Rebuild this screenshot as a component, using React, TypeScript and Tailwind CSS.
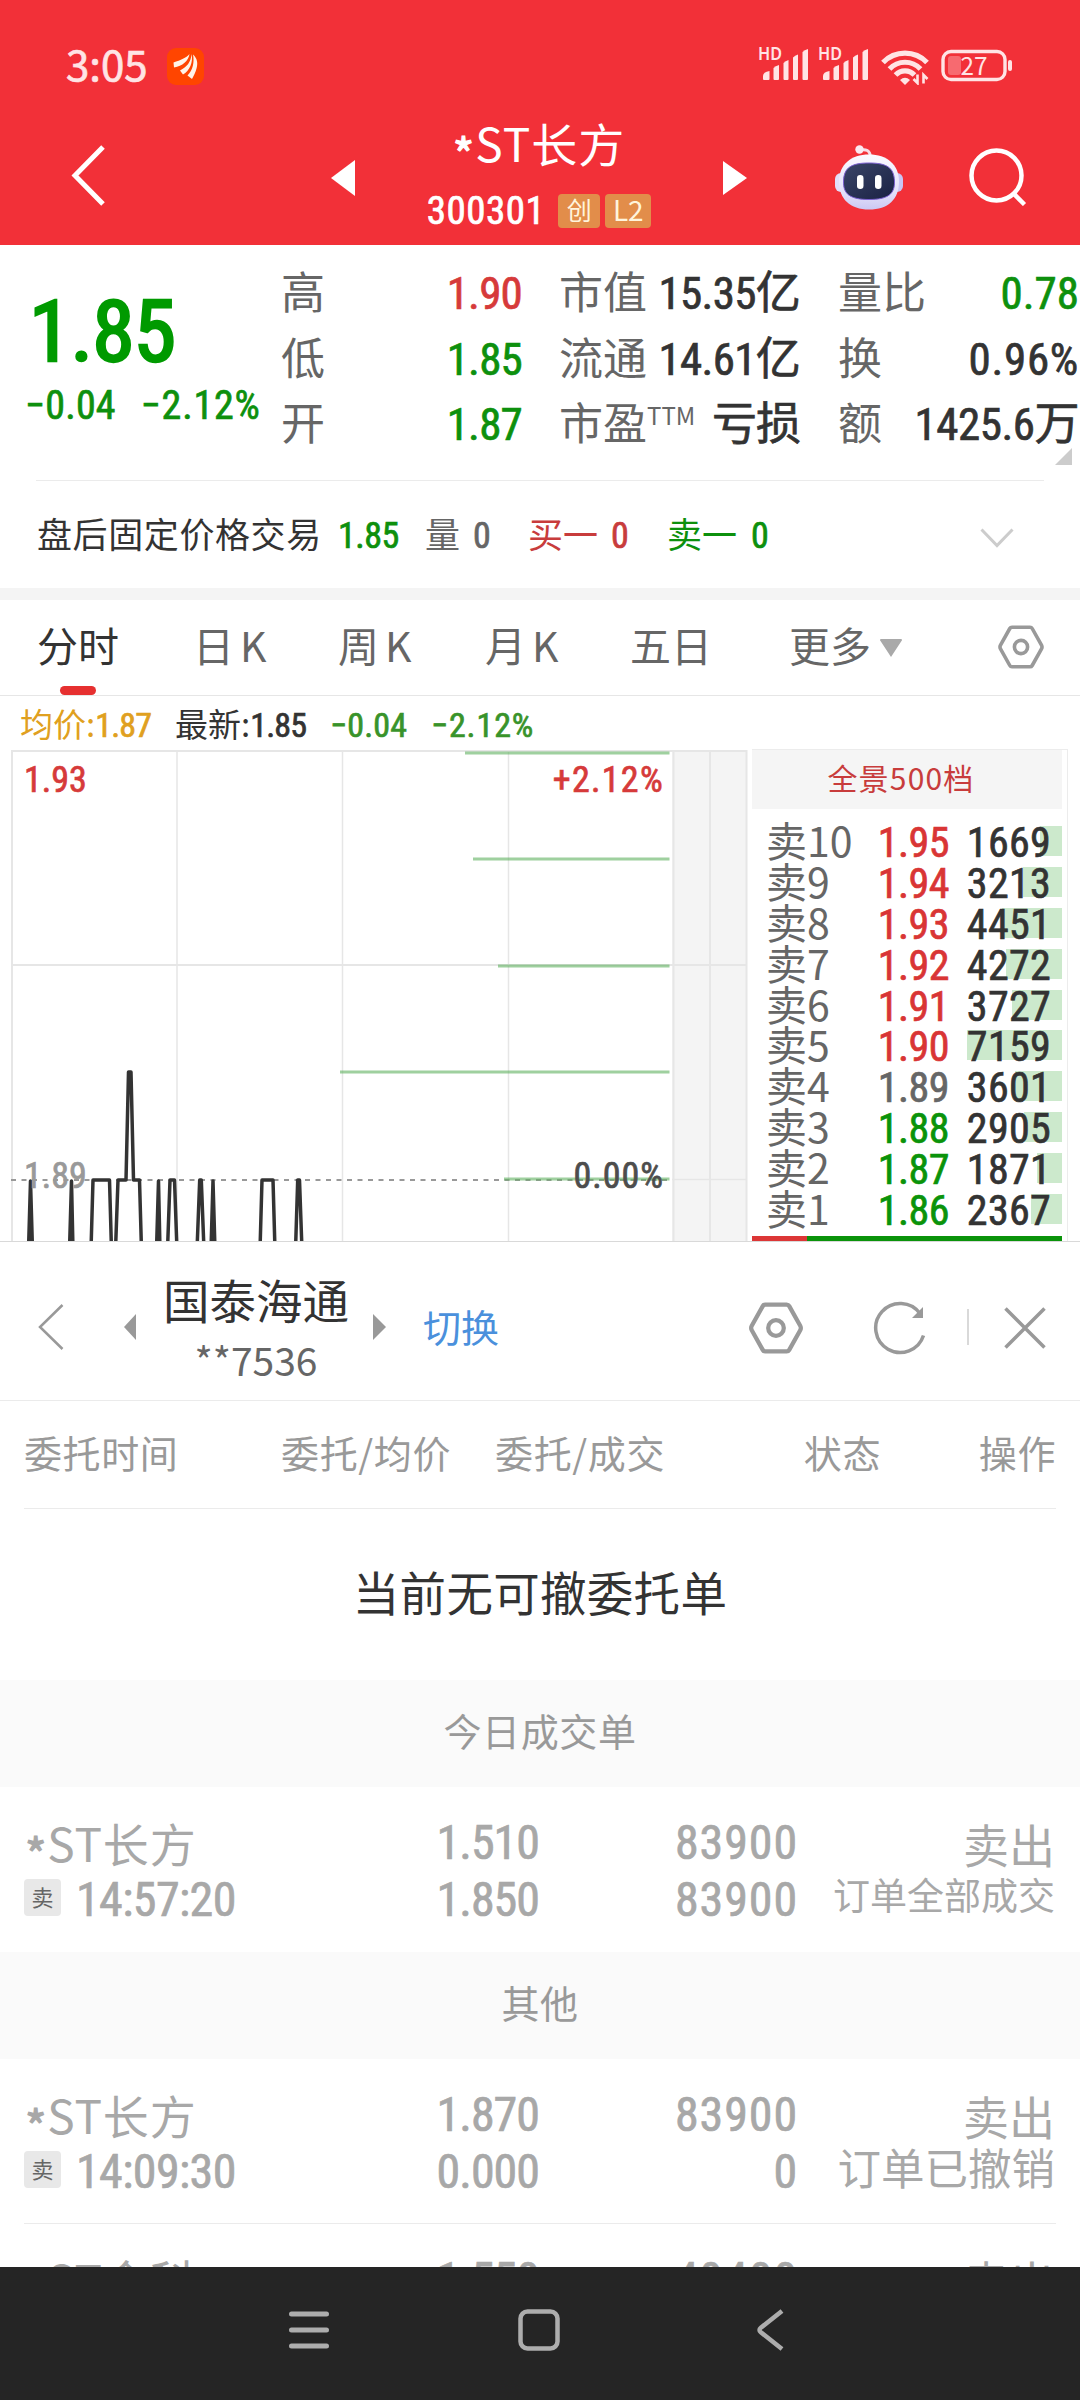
import type { ReactNode } from "react";

interface Level {
    name: string;
    price: string;
    volume: string;
    color: string;
    bar: number;
}

interface Order {
    name: string;
    price: string;
    amount: string;
    time?: string;
    avgPrice?: string;
    filled?: string;
    status?: string;
    statusClass?: string;
}

const levels: Level[] = [
    { name: "卖10", price: "1.95", volume: "1669", color: "text-[#d93535]", bar: 22 },
    { name: "卖9", price: "1.94", volume: "3213", color: "text-[#d93535]", bar: 39 },
    { name: "卖8", price: "1.93", volume: "4451", color: "text-[#d93535]", bar: 60 },
    { name: "卖7", price: "1.92", volume: "4272", color: "text-[#d93535]", bar: 56 },
    { name: "卖6", price: "1.91", volume: "3727", color: "text-[#d93535]", bar: 50 },
    { name: "卖5", price: "1.90", volume: "7159", color: "text-[#d93535]", bar: 95 },
    { name: "卖4", price: "1.89", volume: "3601", color: "text-[#666666]", bar: 47 },
    { name: "卖3", price: "1.88", volume: "2905", color: "text-[#0a930a]", bar: 38 },
    { name: "卖2", price: "1.87", volume: "1871", color: "text-[#0a930a]", bar: 25 },
    { name: "卖1", price: "1.86", volume: "2367", color: "text-[#0a930a]", bar: 31 },
];

const doneOrder: Order = {
    name: "ST长方",
    time: "14:57:20",
    price: "1.510",
    avgPrice: "1.850",
    amount: "83900",
    filled: "83900",
    status: "订单全部成交",
    statusClass: "text-[37px]",
};

const cancelledOrder: Order = {
    name: "ST长方",
    time: "14:09:30",
    price: "1.870",
    avgPrice: "0.000",
    amount: "83900",
    filled: "0",
    status: "订单已撤销",
    statusClass: "text-[43.5px]",
};

const lastOrder: Order = {
    name: "ST金科",
    price: "1.550",
    amount: "49400",
};

// Narrow digits used for every price and volume
function Num({ className = "", children }: { className?: string; children: ReactNode }) {
    return (
        <span className={`font-['Roboto_Condensed','Noto_Sans_CJK_SC',sans-serif] leading-none whitespace-nowrap [-webkit-text-stroke:0.7px] ${className}`}>
            {children}
        </span>
    );
}

function StockName({ name }: { name: string }) {
    return (
        <>
            <span className="relative top-[11px] [-webkit-text-stroke:1.2px]">*</span>
            {name}
        </>
    );
}

function HexIcon({ className }: { className: string }) {
    return (
        <svg viewBox="0 0 46 44" fill="none" stroke="#999999" strokeWidth="3.6" strokeLinejoin="round" className={className}>
            <path d="M14 2.2h18a2.5 2.5 0 0 1 2.2 1.3l9.3 16.6a4 4 0 0 1 0 3.8l-9.3 16.6a2.5 2.5 0 0 1-2.2 1.3H14a2.5 2.5 0 0 1-2.2-1.3L2.5 23.9a4 4 0 0 1 0-3.8L11.8 3.5A2.5 2.5 0 0 1 14 2.2Z" />
            <circle cx="23" cy="22" r="6.6" />
        </svg>
    );
}

function Signal() {
    return (
        <svg viewBox="0 0 52 38" className="-mt-[2px] h-[38px] w-[52px]" fill="#ffe4e5">
            <text x="0" y="15" fontSize="17" fontWeight="600" fontFamily="'Noto Sans', sans-serif" textLength="24" lengthAdjust="spacingAndGlyphs">HD</text>
            <path d="M5 34v-3q0-4 6.5-5v8q0 1-1 1H6q-1 0-1-1Z" />
            <path d="M15.500 34V23q2-2 5.500-3v14q0 1-1 1h-3.500q-1 0-1-1Z" />
            <path d="M25.500 34V18q2-2 5-3v19q0 1-1 1h-3q-1 0-1-1Z" />
            <path d="M35 34V12.500q2-2 5-3V34q0 1-1 1h-3q-1 0-1-1Z" />
            <path d="M44.500 34V7q2-2 5.500-3v30q0 1-1 1h-3.500q-1 0-1-1Z" />
        </svg>
    );
}

function StatusBar() {
    return (
        <div className="flex h-[110px] items-start pt-[46px]">
            <span className="ml-[66px] w-[101px] text-[42px] leading-[34px] text-[#ffe4e5] [-webkit-text-stroke:0.7px]">3:05</span>
            <svg viewBox="0 0 37 37" className="mt-[2px] size-[37px]">
                <rect width="37" height="37" rx="9" fill="#ff4500" />
                <g fill="#fff4e8">
                    <path d="M6.5 14.5C14 12 19 10 22.5 6c-1 7-7 12-15.500 13.500Z" />
                    <path d="M13 22.500C20 19 24 14 24.500 6c2 8-2 17-8.500 20.500Z" />
                    <path d="M20.500 27.500C26 22 27.500 14 26 6.500c4.500 4 5 9 3.500 14-1 4-3 8-4.500 10.500Z" />
                </g>
            </svg>
            <div className="ml-[554px] flex pt-[1px]">
                <Signal />
                <div className="w-[8px]" />
                <Signal />
                <svg viewBox="0 0 48 38" className="ml-[11px] h-[38px] w-[48px]" fill="none" stroke="#ffe4e5" strokeWidth="5.2">
                    <path d="M2 15.500C14 3 34 3 46 15.500" />
                    <path d="M8.500 22C17 13 31 13 39.500 22" />
                    <path d="M14.500 28C20 22.500 28 22.500 33.500 28" />
                    <path d="M19 33q5-4.500 10 0L24 38Z" fill="#ffe4e5" stroke="none" />
                    <path d="M36.500 27.500V36l-4-4M42.500 36.500V28l4 4" strokeWidth="2.600" />
                </svg>
                <svg viewBox="0 0 72 36" className="-mt-[1px] ml-[12px] h-[36px] w-[72px]">
                    <rect x="2" y="5.500" width="62" height="28" rx="8" fill="none" stroke="#ffe4e5" strokeWidth="3.400" />
                    <rect x="7" y="10" width="13" height="19" rx="3" fill="#f76a70" />
                    <rect x="67" y="14" width="4" height="11" rx="2" fill="#ffe4e5" />
                    <text x="19.500" y="28.500" fontSize="25" fontFamily="'Noto Sans CJK SC', sans-serif" fill="#ffe4e5" textLength="27" lengthAdjust="spacingAndGlyphs">27</text>
                </svg>
            </div>
        </div>
    );
}

function RobotIcon() {
    return (
        <svg viewBox="0 0 68 66" className="ml-[88px] h-[66px] w-[68px]">
            <defs>
                <linearGradient id="shell" x1="0" y1="0" x2="0" y2="1">
                    <stop offset="0" stopColor="#fbfaff" />
                    <stop offset="0.7" stopColor="#e3e0fa" />
                    <stop offset="1" stopColor="#cbc8f3" />
                </linearGradient>
                <linearGradient id="face" x1="0" y1="0" x2="1" y2="1">
                    <stop offset="0" stopColor="#3a4568" />
                    <stop offset="1" stopColor="#1a2143" />
                </linearGradient>
            </defs>
            <path d="M25 5c6-1 10 0 10.500 7" fill="none" stroke="#f7dbe6" strokeWidth="3" />
            <circle cx="24.500" cy="4.500" r="4.200" fill="#fbe9f0" />
            <rect x="0" y="28" width="12" height="19" rx="6" fill="#e2defa" />
            <rect x="56" y="28" width="12" height="19" rx="6" fill="#c9c5f4" />
            <path d="M34 9.500c18 0 30 10 30 27 0 18-11 28-30 28S4 54 4 36.500c0-17 12-27 30-27Z" fill="url(#shell)" />
            <path d="M34 18c17 0 25 4 25.500 18C60 49 53 54.500 34 54.500S8 49 8.500 36C9 22 17 18 34 18Z" fill="url(#face)" stroke="#7b5fd0" strokeWidth="1" />
            <rect x="22" y="30" width="6.500" height="14" rx="3.200" fill="#fff" />
            <rect x="40" y="30" width="6.500" height="14" rx="3.200" fill="#fff" />
        </svg>
    );
}

function Header() {
    return (
        <header className="h-[245px] bg-[#f23038] text-white">
            <StatusBar />
            <div className="flex h-[135px] items-center">
                <svg viewBox="0 0 34 62" className="-mt-[4px] ml-[71px] h-[62px] w-[34px]" fill="none" stroke="#fff" strokeWidth="5">
                    <path d="M32 2 4 30.500 32 59" />
                </svg>
                <svg viewBox="0 0 24 36" className="ml-[226px] h-[36px] w-[24px]" fill="#fff">
                    <path d="M24 0v36L0 18Z" />
                </svg>
                <div className="ml-[59px] flex h-full w-[250px] flex-col items-center pt-[5px]">
                    <h1 className="text-[46px] leading-[55px] tracking-[1px] whitespace-nowrap">
                        <StockName name="ST长方" />
                    </h1>
                    <div className="mt-[21px] flex h-[40px] items-center">
                        <Num className="mr-[13px] text-[39px] tracking-[0.5px]">300301</Num>
                        <span className="mr-[5px] h-[34px] w-[42px] rounded-[4px] bg-[#e28d4a] text-center text-[25px] leading-[31px] text-[#fff4dc]">创</span>
                        <span className="h-[34px] w-[46px] rounded-[4px] bg-[#e28d4a] text-center text-[28px] leading-[31px] text-[#fff4dc]">L2</span>
                    </div>
                </div>
                <svg viewBox="0 0 24 34" className="ml-[59px] h-[34px] w-[24px]" fill="#fff">
                    <path d="M0 0v34l24-17Z" />
                </svg>
                <RobotIcon />
                <svg viewBox="0 0 58 58" className="-mt-[1px] ml-[66px] h-[58px] w-[58px]" fill="none" stroke="#fff" strokeWidth="4.500">
                    <circle cx="27.500" cy="27.500" r="25" />
                    <path d="m45 46 10.500 10.500" />
                </svg>
            </div>
        </header>
    );
}

function Stat({ label, sup, value, valueClass = "text-[#333333]" }: { label: string; sup?: string; value: string; valueClass?: string }) {
    return (
        <div className="flex h-[65.5px] w-[240px] items-baseline justify-between">
            <span className="text-[44px] leading-[65.5px] whitespace-nowrap text-[#666666]">
                {label}
                {sup && <sup className="relative -top-[15px] align-baseline text-[24px] leading-none">{sup}</sup>}
            </span>
            <Num className={`-mr-[1px] text-[45px] ${valueClass}`}>{value}</Num>
        </div>
    );
}

function Quote() {
    return (
        <section className="relative flex h-[235px]">
            <div className="w-[281px] pt-[44px] text-[#009a00]">
                <Num className="ml-[29px] block text-[86px] tracking-[-1px] [-webkit-text-stroke:2.5px]">1.85</Num>
                <div className="mt-[11px] flex gap-[25px] pl-[25px]">
                    <Num className="text-[40px] tracking-[0.2px] text-[#0d900d]">−0.04</Num>
                    <Num className="text-[40px] tracking-[0.8px] text-[#0d900d]">−2.12%</Num>
                </div>
            </div>
            <div className="pt-[13px]">
                <Stat label="高" value="1.90" valueClass="tracking-[-0.8px] text-[#d63a3a]" />
                <Stat label="低" value="1.85" valueClass="tracking-[-0.8px] text-[#0d900d]" />
                <Stat label="开" value="1.87" valueClass="tracking-[-0.8px] text-[#0d900d]" />
            </div>
            <div className="pt-[13px] pl-[38px]">
                <Stat label="市值" value="15.35亿" valueClass="tracking-[-0.7px] text-[#333333]" />
                <Stat label="流通" value="14.61亿" valueClass="tracking-[-0.7px] text-[#333333]" />
                <Stat label="市盈" sup="TTM" value="亏损" valueClass="tracking-[-1px] text-[#333333]" />
            </div>
            <div className="pt-[13px] pl-[39px]">
                <Stat label="量比" value="0.78" valueClass="text-[#0d900d]" />
                <Stat label="换" value="0.96%" valueClass="tracking-[0.7px] text-[#333333]" />
                <Stat label="额" value="1425.6万" valueClass="tracking-[-0.5px] text-[#333333]" />
            </div>
            <svg viewBox="0 0 17 17" className="absolute top-[203px] left-[1055px] size-[17px]" fill="#cccccc">
                <path d="M17 0v17H0Z" />
            </svg>
        </section>
    );
}

function AfterHours() {
    return (
        <section className="flex h-[108px] items-baseline pt-[23px] pl-[37px] text-[35px] leading-[60px] text-[#333333]">
            <span className="w-[301px] tracking-[0.6px]">盘后固定价格交易</span>
            <Num className="w-[87px] text-[36px] tracking-[-0.5px] text-[#0d900d]">1.85</Num>
            <span className="w-[48px] text-[#666666]">量</span>
            <Num className="w-[55px] text-[36px] text-[#666666]">0</Num>
            <span className="w-[83px] text-[#c83c3c]">买一</span>
            <Num className="w-[56px] text-[36px] text-[#c83c3c]">0</Num>
            <span className="w-[84px] text-[#0d900d]">卖一</span>
            <Num className="w-[229px] text-[36px] text-[#0d900d]">0</Num>
            <svg viewBox="0 0 34 20" className="h-[20px] w-[34px]" fill="none" stroke="#cccccc" strokeWidth="3">
                <path d="m1.500 1.500 15.500 16 15.500-16" />
            </svg>
        </section>
    );
}

function Tabs() {
    return (
        <nav className="relative flex h-[96px] border-b border-[#e6e6e6] pl-[37px] text-[41px] leading-[89px] text-[#666666]">
            <span className="w-[156px] text-[#333333]">分时</span>
            <span className="w-[145px] tracking-[6px]">日K</span>
            <span className="w-[147px] tracking-[6px]">周K</span>
            <span className="w-[145px] tracking-[6px]">月K</span>
            <span className="w-[159px]">五日</span>
            <span className="w-[91px]">更多</span>
            <svg viewBox="0 0 22 18" className="mt-[39px] h-[18px] w-[22px]" fill="#a9a9a9">
                <path d="M1 0h20a1 1 0 0 1 .8 1.6L11 18 .2 1.600A1 1 0 0 1 1 0Z" />
            </svg>
            <HexIcon className="mt-[25px] ml-[96px] h-[44px] w-[46px]" />
            <span className="absolute bottom-0 left-[60px] h-[9px] w-[36px] rounded-full bg-[#e63030]" />
        </nav>
    );
}

function Chart() {
    return (
        <div className="relative h-[491px] w-[752px]">
            <svg viewBox="0 0 752 491" className="h-[491px] w-[752px]" fill="none">
                <rect x="672" y="0" width="75" height="491" fill="#f4f4f4" />
                <g stroke="#e6e6e6" strokeWidth="2">
                    <path d="M12 0V491M11 1H747M11 215H747M673.500 0V491M710 0V491M746.500 0V491" />
                    <path d="M177 0V491M342.500 0V491M508.500 0V491" strokeWidth="1.500" />
                    <path d="M672 429.500H747" strokeWidth="1.500" />
                </g>
                <path d="M11 430H672" stroke="#999999" strokeWidth="2" strokeDasharray="5 5.500" />
                <g stroke="#5fb05f" strokeOpacity="0.6" strokeWidth="3">
                    <path d="M465 3H669.500M473 109H669.500M498 216H669.500M340 322H669.500M504 429H669.500" />
                </g>
                <g stroke="#333333" strokeWidth="3.500" strokeLinejoin="round">
                    <path d="M28.500 500 30.500 431 32.500 500Z" fill="#333333" />
                    <path d="M69.500 500 71.500 431 73 500Z" fill="#333333" />
                    <path d="M91 500 93 430H109.500L111.500 500" />
                    <path d="M115.500 500 118 430H126L128.500 322H131L133.500 430H139.500L141.500 500" />
                    <path d="M156.500 500 158.500 431 160 500Z" fill="#333333" />
                    <path d="M167.500 500 170 430H174.500L177 500" />
                    <path d="M197 500 199.700 430H201.300L204 500" />
                    <path d="M211 500 213 431 215 500Z" fill="#333333" />
                    <path d="M260 500 262 430H273L275 500" />
                    <path d="M295.500 500 297.700 430H299.500L302 500" />
                </g>
            </svg>
            <Num className="absolute top-[12px] left-[24px] text-[36px] text-[#d63a3a]">1.93</Num>
            <Num className="absolute top-[12px] right-[88px] text-[36px] tracking-[1.3px] text-[#d63a3a]">+2.12%</Num>
            <Num className="absolute top-[408px] left-[24px] text-[36px] text-[#999999]">1.89</Num>
            <Num className="absolute top-[408px] right-[88px] text-[36px] tracking-[1px] text-[#4d4d4d]">0.00%</Num>
        </div>
    );
}

function OrderBook() {
    return (
        <div className="h-[492px] w-[316px] border-t border-r border-[#ececec]">
            <div className="h-[59px] w-[310px] bg-[#f5f5f5] pr-[12px] text-center text-[30px] leading-[55px] tracking-[1.2px] text-[#c83c3c]">全景500档</div>
            <div className="mt-[10px] w-[310px]">
                {levels.map((level) => (
                    <div key={level.name} className="relative flex h-[40.9px] items-baseline pl-[14px]">
                        <span className="absolute top-[7px] right-0 h-[30px] bg-[#cce9cc]" style={{ width: level.bar }} />
                        <span className="relative w-[97px] text-[41px] leading-[40.9px] text-[#666666]">{level.name}</span>
                        <Num className={`relative w-[86px] text-right text-[42px] tracking-[-0.5px] ${level.color}`}>{level.price}</Num>
                        <Num className="relative w-[102px] text-right text-[42px] tracking-[0.3px] text-[#333333]">{level.volume}</Num>
                    </div>
                ))}
            </div>
            <div className="mt-[8px] flex h-[6px] w-[310px]">
                <span className="w-[55px] bg-[#dc3636]" />
                <span className="flex-1 bg-[#0a930a]" />
            </div>
        </div>
    );
}

function Intraday() {
    return (
        <section>
            <div className="flex h-[53px] items-baseline pl-[20px] text-[33px] leading-[54px]">
                <span className="w-[155px] text-[#e0a020]">
                    均价:<Num className="text-[34px] tracking-[-0.8px]">1.87</Num>
                </span>
                <span className="w-[155px] text-[#333333]">
                    最新:<Num className="text-[34px] tracking-[-0.8px]">1.85</Num>
                </span>
                <Num className="w-[101px] text-[34px] tracking-[0.2px] text-[#38932a]">−0.04</Num>
                <Num className="text-[34px] tracking-[0.9px] text-[#38932a]">−2.12%</Num>
            </div>
            <div className="flex h-[493px] items-end overflow-hidden border-b border-[#d9d9d9]">
                <Chart />
                <OrderBook />
            </div>
        </section>
    );
}

function AccountBar() {
    return (
        <div className="flex h-[159px] items-center border-b border-[#ebebeb] pt-[12px] text-[#333333]">
            <svg viewBox="0 0 26 46" className="ml-[38px] h-[46px] w-[26px]" fill="none" stroke="#999999" strokeWidth="2.500">
                <path d="M24.500 1 2 23l22.500 22" />
            </svg>
            <svg viewBox="0 0 12 26" className="ml-[60px] h-[26px] w-[12px]" fill="#999999">
                <path d="M12 0v26L0 13Z" />
            </svg>
            <div className="-mt-[3px] ml-[20px] flex w-[200px] flex-col items-center">
                <span className="text-[46.5px] leading-[56px]">国泰海通</span>
                <span className="mt-[10px] text-[39px] leading-[44px] text-[#666666]">**7536</span>
            </div>
            <svg viewBox="0 0 13 26" className="ml-[17px] h-[26px] w-[13px]" fill="#999999">
                <path d="M0 0v26l13-13Z" />
            </svg>
            <span className="-mt-[2px] ml-[37px] w-[325px] text-[38px] leading-[44px] text-[#4a90dc]">切换</span>
            <HexIcon className="mt-[1px] h-[52px] w-[56px]" />
            <svg viewBox="0 0 54 54" className="mt-[1px] ml-[69px] size-[54px]" fill="none" stroke="#999999" strokeWidth="3.500">
                <path d="M50.500 34.500A24.500 24.500 0 1 1 47 12.500" />
                <path d="M50 6v11H39Z" fill="#999999" stroke="none" />
            </svg>
            <span className="ml-[40px] h-[36px] w-[2px] bg-[#d9d9d9]" />
            <svg viewBox="0 0 42 42" className="mt-[2px] ml-[35px] size-[42px]" fill="none" stroke="#999999" strokeWidth="3.500">
                <path d="m1.500 1.500 39 39M40.500 1.500l-39 39" />
            </svg>
        </div>
    );
}

function OrderRow({ order }: { order: Order }) {
    return (
        <div className="flex h-[165px] pt-[27px] text-[46px] leading-[57px] text-[#a8a8a8]">
            <div className="w-[300px] pl-[25px] whitespace-nowrap">
                <div className="tracking-[0.8px]">
                    <StockName name={order.name} />
                </div>
                {order.time && (
                    <div className="flex -ml-[1px] items-center">
                        <span className="-mt-[5px] mr-[15px] h-[37px] w-[37px] rounded-[4px] bg-[#e8e8e8] text-center text-[22px] leading-[34px] text-[#666666]">卖</span>
                        <Num className="text-[48px] leading-[57px]! tracking-[-0.6px]">{order.time}</Num>
                    </div>
                )}
            </div>
            <div className="flex w-[239px] flex-col text-right tracking-[-1px]">
                <Num className="text-[48px] leading-[57px]!">{order.price}</Num>
                <Num className="text-[48px] leading-[57px]!">{order.avgPrice}</Num>
            </div>
            <div className="flex w-[259px] flex-col text-right tracking-[0.9px]">
                <Num className="text-[48px] leading-[57px]!">{order.amount}</Num>
                <Num className="text-[48px] leading-[57px]!">{order.filled}</Num>
            </div>
            <div className="w-[257px] text-right whitespace-nowrap">
                <div className="pt-[1px]">卖出</div>
                <div className={`-mt-[6px] ${order.statusClass} leading-[57px]`}>{order.status}</div>
            </div>
        </div>
    );
}

function SectionTitle({ children }: { children: ReactNode }) {
    return <h2 className="h-[107px] bg-[#fafafa] text-center text-[38px] leading-[100px] tracking-[0.6px] text-[#999999]">{children}</h2>;
}

function Orders() {
    return (
        <section className="h-[866px] overflow-hidden">
            <div className="mx-[24px] flex h-[108px] border-b border-[#ebebeb] text-[38px] leading-[101px] tracking-[0.6px] whitespace-nowrap text-[#999999]">
                <span className="w-[227px]">委托时间</span>
                <span className="w-[200px] text-right">委托/均价</span>
                <span className="w-[214px] text-right">委托/成交</span>
                <span className="w-[216px] text-right">状态</span>
                <span className="w-[175px] text-right">操作</span>
            </div>
            <p className="h-[171px] text-center text-[46.5px] leading-[163px] tracking-[0.3px] text-[#333333]">当前无可撤委托单</p>
            <SectionTitle>今日成交单</SectionTitle>
            <OrderRow order={doneOrder} />
            <SectionTitle>其他</SectionTitle>
            <OrderRow order={cancelledOrder} />
            <div className="mx-[24px] -mt-px h-px bg-[#ebebeb]" />
            <OrderRow order={lastOrder} />
        </section>
    );
}

function SystemNav() {
    return (
        <footer className="flex h-[133px] items-center bg-[#252525] pb-[8px]">
            <svg viewBox="0 0 40 38" className="ml-[289px] h-[38px] w-[40px]" stroke="#adadad" strokeWidth="5" strokeLinecap="round">
                <path d="M2.500 3h35M2.500 19h35M2.500 35h35" />
            </svg>
            <svg viewBox="0 0 42 42" className="ml-[189px] size-[42px]" fill="none" stroke="#adadad" strokeWidth="4.500">
                <rect x="2.500" y="2.500" width="37" height="37" rx="7" />
            </svg>
            <svg viewBox="0 0 28 42" className="ml-[196px] h-[42px] w-[28px]" fill="none" stroke="#adadad" strokeWidth="4.500" strokeLinejoin="round">
                <path d="M26 2 4.500 19a2.500 2.500 0 0 0 0 4L26 40" />
            </svg>
        </footer>
    );
}

export default function App() {
    return (
        <div className="h-[2400px] w-[1080px] overflow-hidden bg-white font-['Noto_Sans_CJK_SC',sans-serif]">
            <Header />
            <Quote />
            <div className="mx-[36px] -mb-px h-px bg-[#ebebeb]" />
            <AfterHours />
            <div className="h-[12px] bg-[#f4f4f4]" />
            <Tabs />
            <Intraday />
            <AccountBar />
            <Orders />
            <SystemNav />
        </div>
    );
}
